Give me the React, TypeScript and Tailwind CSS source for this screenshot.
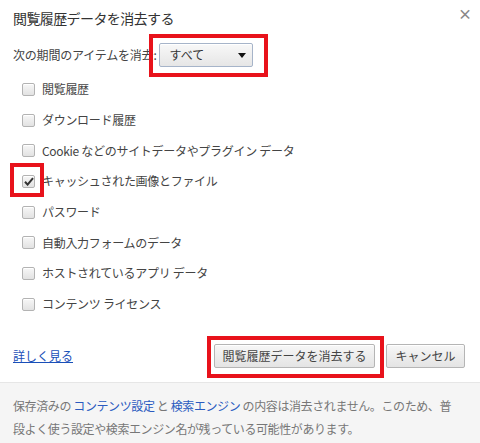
const items = [
  { label: '閲覧履歴', checked: false },
  { label: 'ダウンロード履歴', checked: false },
  { label: 'Cookie などのサイトデータやプラグイン データ', checked: false },
  { label: 'キャッシュされた画像とファイル', checked: true },
  { label: 'パスワード', checked: false },
  { label: '自動入力フォームのデータ', checked: false },
  { label: 'ホストされているアプリ データ', checked: false },
  { label: 'コンテンツ ライセンス', checked: false },
];

function Checkbox({ checked }: { checked: boolean }) {
  return (
    <span className="flex h-[13px] w-[13px] items-center justify-center rounded-[2px] border border-[#b3b3b3] bg-gradient-to-b from-[#f7f7f7] to-[#e2e2e2] shadow-[inset_0_1px_0_#fff]">
      {checked && (
        <svg width="10" height="9" viewBox="0 0 10 9">
          <path d="M1 4.8 L3.6 7.6 L9 1.2" fill="none" stroke="#333" strokeWidth="2" />
        </svg>
      )}
    </span>
  );
}

export default function App() {
  return (
    <div
      className="relative h-[443px] w-[480px] overflow-hidden bg-white text-[#444]"
      style={{ fontFamily: '"Noto Sans CJK JP", "Noto Sans", sans-serif' }}
    >
      {/* header */}
      <div className="flex h-[36px] items-center justify-between pl-[13px] pr-[8px]">
        <h1 className="text-[14px] tracking-[-0.6px] text-[#333]">閲覧履歴データを消去する</h1>
        <span className="mb-[10px] text-[14px] font-bold text-[#888]">×</span>
      </div>

      {/* period */}
      <div className="flex h-[38px] items-center pl-[13px]">
        <span className="text-[12px] tracking-[-0.2px]">次の期間のアイテムを消去:</span>
        <div className="ml-[2px] flex h-[24px] w-[94px] items-center justify-between rounded-[2px] border border-[#a6b4c9] bg-gradient-to-b from-[#f8f8f8] to-[#e6e6e6] pl-[10px] pr-[6px] shadow-[inset_0_1px_0_#fff]">
          <span className="text-[12px] text-[#333]">すべて</span>
          <svg width="8" height="5" viewBox="0 0 8 5">
            <path d="M0 0 H8 L4 5 Z" fill="#111" />
          </svg>
        </div>
      </div>

      {/* checkboxes */}
      <div className="flex flex-col pl-[22px]">
        {items.map((it) => (
          <label key={it.label} className="flex h-[30.7px] items-center gap-[7px]">
            <Checkbox checked={it.checked} />
            <span className="text-[12px] tracking-[-0.3px]">{it.label}</span>
          </label>
        ))}
      </div>

      {/* buttons */}
      <div className="mt-[24px] flex h-[24px] items-center justify-between pl-[13px] pr-[15px]">
        <a className="text-[12px] text-[#1a4fb8] underline">詳しく見る</a>
        <div className="flex gap-[11px]">
          <button className="h-[24px] w-[161px] rounded-[2px] border border-[#b5b5b5] bg-gradient-to-b from-[#f7f7f7] to-[#e4e4e4] text-[12px] text-[#444] shadow-[inset_0_1px_0_#fff]">
            閲覧履歴データを消去する
          </button>
          <button className="h-[24px] w-[79px] rounded-[2px] border border-[#b5b5b5] bg-gradient-to-b from-[#f7f7f7] to-[#e4e4e4] text-[12px] text-[#444] shadow-[inset_0_1px_0_#fff]">
            キャンセル
          </button>
        </div>
      </div>

      {/* footer */}
      <div className="mt-[14px] h-[70px] border-t border-[#e6e6e6] bg-[#f5f5f5] px-[13px] pt-[11px] text-[12px] leading-[23px] tracking-[-0.4px] text-[#777]">
        <p className="whitespace-nowrap">
          保存済みの <span className="text-[#2a5bc0]">コンテンツ設定</span> と{' '}
          <span className="text-[#2a5bc0]">検索エンジン</span> の内容は消去されません。このため、普
        </p>
        <p className="whitespace-nowrap">段よく使う設定や検索エンジン名が残っている可能性があります。</p>
      </div>

      {/* red annotation boxes */}
      <div className="pointer-events-none absolute left-[149px] top-[34px] h-[43px] w-[119px] border-4 border-[#e8121b]" />
      <div className="pointer-events-none absolute left-[10px] top-[163px] h-[34px] w-[34px] border-4 border-[#e8121b]" />
      <div className="pointer-events-none absolute left-[207px] top-[336px] h-[42px] w-[177px] border-4 border-[#e8121b]" />
    </div>
  );
}
